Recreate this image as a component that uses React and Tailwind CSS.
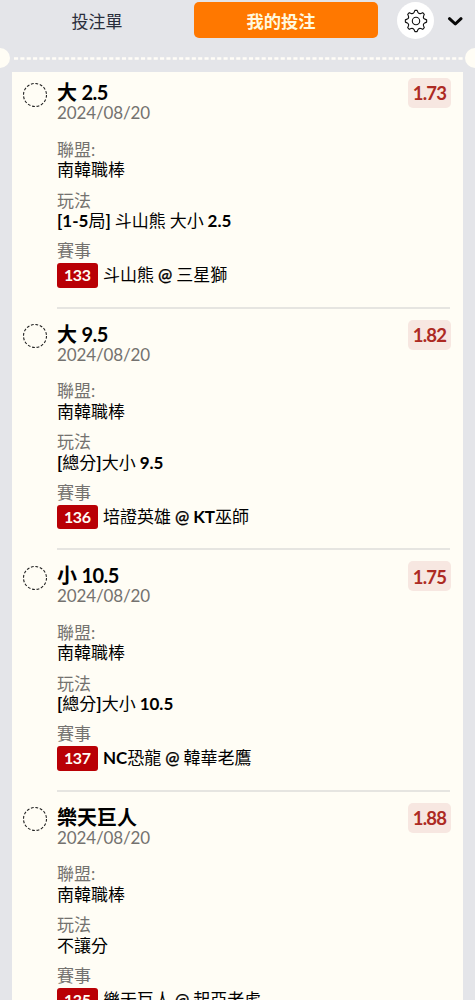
import React from "react";

const bets = [
  { pick: "大 2.5", odds: "1.73", play: "[1-5局] 斗山熊 大小 2.5", id: "133", match: "斗山熊 @ 三星獅" },
  { pick: "大 9.5", odds: "1.82", play: "[總分]大小 9.5", id: "136", match: "培證英雄 @ KT巫師" },
  { pick: "小 10.5", odds: "1.75", play: "[總分]大小 10.5", id: "137", match: "NC恐龍 @ 韓華老鷹" },
  { pick: "樂天巨人", odds: "1.88", play: "不讓分", id: "135", match: "樂天巨人 @ 起亞老虎" },
];

// Latin runs are bold, Chinese runs stay regular, the @ sign is lighter.
function Mixed({ text }) {
  return text.split(/([\x21-\x7e]+)/).map((part, i) => (
    <span key={i} className={part === "@" ? "font-medium [-webkit-text-stroke:0.3px_black]" : i % 2 ? "font-bold" : "font-normal"}>{part}</span>
  ));
}

function gearPath() {
  const pt = (r, deg) => {
    const a = (deg * Math.PI) / 180;
    return `${(12 + r * Math.sin(a)).toFixed(2)} ${(12 - r * Math.cos(a)).toFixed(2)}`;
  };
  let d = "";
  for (let i = 0; i < 8; i++) {
    const c = i * 45;
    d += `${i ? "L" : "M"}${pt(10.7, c - 6)}L${pt(10.7, c + 6)}L${pt(9, c + 12)}Q${pt(7.4, c + 22.5)} ${pt(9, c + 33)}`;
  }
  return d + "Z";
}

function Bet({ bet, first }) {
  const [name, line] = bet.pick.split(" ");
  return (
    <article className={`flex pl-[11px] pr-[13px] ${first ? "pt-[9px]" : "pt-[14px]"}`}>
      <svg className="mt-[1.5px] h-[25px] w-[24px] shrink-0" viewBox="0 0 24 25" fill="none">
        <circle cx="12" cy="12" r="11.5" stroke="#222" strokeWidth="1.1" strokeDasharray="2.8 1.72" />
      </svg>
      <div className={`ml-[10px] flex-1 whitespace-nowrap border-b-2 border-[#e6e5e1] text-[17px] leading-[20.5px] text-black ${first ? "h-[227.8px]" : "h-[227.6px]"}`}>
        <div className="flex justify-between">
          <div>
            <h2 className="h-[22px] text-[20px] font-bold leading-[22px]">
              {name}
              {line && <span className="tracking-[-0.5px]"> {line}</span>}
            </h2>
            <p className="h-[20px] leading-[20px] tracking-[-0.12px] text-[#74726f]">2024/08/20</p>
          </div>
          <span className="-mr-[1px] -mt-[3px] flex h-[30px] w-[43px] items-center justify-center rounded-[5px] bg-[#f7e7e1] pt-px text-[18.5px] font-bold tracking-[-0.8px] text-[#ad2a23]">
            {bet.odds}
          </span>
        </div>
        <dl className="mt-[16.5px]">
          <dt className="text-[#74726f]">聯盟:</dt>
          <dd>南韓職棒</dd>
          <dt className="mt-[10px] text-[#74726f]">玩法</dt>
          <dd className="[word-spacing:-0.4px]"><Mixed text={bet.play} /></dd>
          <dt className="mt-[9.4px] text-[#74726f]">賽事</dt>
          <dd className="mt-[1.7px] flex items-center">
            <span className="mr-[6px] flex h-[24.5px] w-[40.5px] items-center justify-center rounded-[3px] bg-[#b90005] text-[16px] font-bold tracking-[-0.4px] text-[#fffdf5]">
              {bet.id}
            </span>
            <span className="-ml-[0.5px] [word-spacing:-0.4px]"><Mixed text={bet.match} /></span>
          </dd>
        </dl>
      </div>
    </article>
  );
}

export default function App() {
  return (
    <div className="flex h-[1000px] w-[475px] flex-col overflow-hidden bg-[#e4e5e9] font-['Lato','Noto_Sans_CJK_TC',sans-serif]">
      <header className="flex h-[48px] items-start text-[17px]">
        <button className="mt-[2px] h-[36px] w-[193px] pl-px pt-[3px] text-[#292d3b]">投注單</button>
        <button className="ml-[0.5px] mt-[2px] h-[36px] w-[184px] rounded-[5px] bg-[#ff7800] pr-[9px] pt-[3px] text-[17.3px] font-bold text-[#fff8df]">我的投注</button>
        <button className="ml-[19.5px] mt-[2px] flex size-[37px] items-center justify-center rounded-full bg-white">
          <svg className="size-[24px]" viewBox="0 0 24 24" fill="none" stroke="#111" strokeWidth="1.1" strokeLinejoin="round">
            <path d={gearPath()} />
            <circle cx="12" cy="12" r="3.7" />
          </svg>
        </button>
        <svg className="ml-[13px] mt-[15px] h-[12px] w-[16px]" viewBox="0 0 16 12" fill="none" stroke="#080808" strokeWidth="3" strokeLinecap="round" strokeLinejoin="round">
          <path d="M2.5 3.7 8.3 9 14 3.7" />
        </svg>
      </header>
      <div className="flex h-[20px] items-center justify-between">
        <span className="h-[20px] w-[10px] rounded-r-full bg-[#fffdf5]" />
        <svg className="mt-[1px] h-[3px] w-[453px]" viewBox="0 0 453 3">
          <path d="M3 1.5H453" stroke="#fffdf7" strokeWidth="2.6" strokeDasharray="4.1 2.25" />
        </svg>
        <span className="h-[20px] w-[10px] rounded-l-full bg-[#fffdf5]" />
      </div>
      <main className="ml-[12px] mt-[4px] w-[451px] flex-1 overflow-hidden bg-[#fffdf5]">
        {bets.map((bet, i) => <Bet key={bet.id} bet={bet} first={i === 0} />)}
      </main>
    </div>
  );
}
